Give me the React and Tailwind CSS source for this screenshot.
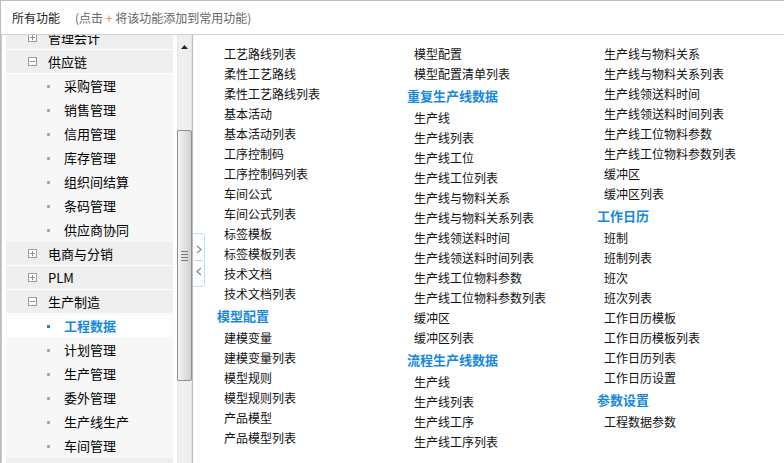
import React from "react";

const FONT = { fontFamily: '"Noto Sans CJK SC", "Noto Sans", sans-serif' };

const TREE = [
  { type: "group", label: "管理会计", open: false },
  { type: "group", label: "供应链", open: true },
  { type: "child", label: "采购管理" },
  { type: "child", label: "销售管理" },
  { type: "child", label: "信用管理" },
  { type: "child", label: "库存管理" },
  { type: "child", label: "组织间结算" },
  { type: "child", label: "条码管理" },
  { type: "child", label: "供应商协同" },
  { type: "group", label: "电商与分销", open: false },
  { type: "group", label: "PLM", open: false },
  { type: "group", label: "生产制造", open: true },
  { type: "child", label: "工程数据", active: true },
  { type: "child", label: "计划管理" },
  { type: "child", label: "生产管理" },
  { type: "child", label: "委外管理" },
  { type: "child", label: "生产线生产" },
  { type: "child", label: "车间管理" },
  { type: "group", label: "质量管理", open: false },
];

const COLUMNS = [
  [
    "工艺路线列表", "柔性工艺路线", "柔性工艺路线列表", "基本活动", "基本活动列表",
    "工序控制码", "工序控制码列表", "车间公式", "车间公式列表", "标签模板",
    "标签模板列表", "技术文档", "技术文档列表",
    { h: "模型配置" },
    "建模变量", "建模变量列表", "模型规则", "模型规则列表", "产品模型", "产品模型列表",
  ],
  [
    "模型配置", "模型配置清单列表",
    { h: "重复生产线数据" },
    "生产线", "生产线列表", "生产线工位", "生产线工位列表", "生产线与物料关系",
    "生产线与物料关系列表", "生产线领送料时间", "生产线领送料时间列表",
    "生产线工位物料参数", "生产线工位物料参数列表", "缓冲区", "缓冲区列表",
    { h: "流程生产线数据" },
    "生产线", "生产线列表", "生产线工序", "生产线工序列表",
  ],
  [
    "生产线与物料关系", "生产线与物料关系列表", "生产线领送料时间", "生产线领送料时间列表",
    "生产线工位物料参数", "生产线工位物料参数列表", "缓冲区", "缓冲区列表",
    { h: "工作日历" },
    "班制", "班制列表", "班次", "班次列表", "工作日历模板", "工作日历模板列表",
    "工作日历列表", "工作日历设置",
    { h: "参数设置" },
    "工程数据参数",
  ],
];

function ToggleBox({ open }) {
  return (
    <span className="relative w-[9px] h-[9px] border border-[#9a9a9a] bg-white shrink-0">
      <span className="absolute left-[1px] right-[1px] top-[3px] h-[1px] bg-[#8a8a8a]" />
      {!open && <span className="absolute top-[1px] bottom-[1px] left-[3px] w-[1px] bg-[#8a8a8a]" />}
    </span>
  );
}

function TreeRow({ item }) {
  if (item.type === "group") {
    return (
      <div className="h-[24px] border-b border-white bg-[#efefef] flex items-center pl-[22px] gap-[11px] text-[13px] text-black">
        <ToggleBox open={item.open} />
        <span>{item.label}</span>
      </div>
    );
  }
  return (
    <div className="h-[24px] bg-[#f7f7f7] flex items-center">
      <div
        className={`flex-1 h-[22px] mx-[1px] flex items-center pl-[40px] gap-[14px] text-[13px] ${
          item.active ? "bg-white text-[#1688de] font-bold" : "text-black"
        }`}
      >
        <span className={`w-[3px] h-[3px] ${item.active ? "bg-[#1688de]" : "bg-[#a8a8a8]"}`} />
        <span>{item.label}</span>
      </div>
    </div>
  );
}

function Scrollbar() {
  return (
    <div className="w-[15px] bg-[#efefef] border-x border-[#e4e4e4] flex flex-col items-center">
      <div className="h-[22px] w-full flex items-center justify-center pt-[2px]">
        <svg width="7" height="4" viewBox="0 0 7 4"><path d="M3.5 0 L7 4 L0 4 Z" fill="#222" /></svg>
      </div>
      <div className="mt-[73px] w-[15px] h-[251px] border border-[#8f8f8f] rounded-[2px] bg-gradient-to-r from-[#f4f4f4] via-[#e2e2e2] to-[#cfcfcf] flex flex-col items-center justify-center gap-[2px]">
        <span className="w-[7px] h-[1px] bg-[#777]" />
        <span className="w-[7px] h-[1px] bg-[#777]" />
        <span className="w-[7px] h-[1px] bg-[#777]" />
        <span className="w-[7px] h-[1px] bg-[#777]" />
      </div>
    </div>
  );
}

export default function App() {
  return (
    <div className="w-[784px] h-[463px] overflow-hidden bg-white border-t border-l border-[#bdbdbd] flex flex-col" style={FONT}>
      {/* Header */}
      <div className="h-[33px] shrink-0 flex items-center pl-[11px] text-[12px]">
        <span className="text-[#222]">所有功能</span>
        <span className="ml-[15px] text-[#666]">
          (点击 <span className="text-[#e08a3c]">+</span> 将该功能添加到常用功能)
        </span>
      </div>

      <div className="flex-1 flex border-t border-[#d0d0d0] min-h-0">
        {/* Left tree */}
        <div className="w-[192px] shrink-0 flex border-l border-[#c8c8c8] border-r border-r-[#bcbcbc]">
          <div className="flex-1 overflow-hidden px-[4px]">
            <div className="-mt-[9px]">
              {TREE.map((item, i) => (
                <TreeRow key={i} item={item} />
              ))}
            </div>
          </div>
          <Scrollbar />
        </div>

        {/* Right content */}
        <div className="relative flex-1 flex pl-[24px] pt-[9px] overflow-hidden">
          <div className="absolute left-0 top-[198px] w-[12px] h-[54px] border border-l-0 border-[#bfdcf3] rounded-r-[4px] bg-white flex flex-col items-center justify-center gap-[4px]">
            <svg width="6" height="9" viewBox="0 0 6 9"><path d="M1 1 L5 4.5 L1 8" fill="none" stroke="#888" strokeWidth="1.2" /></svg>
            <span className="w-[8px] h-[1px] bg-[#d0d0d0] my-[2px]" />
            <svg width="6" height="9" viewBox="0 0 6 9"><path d="M5 1 L1 4.5 L5 8" fill="none" stroke="#888" strokeWidth="1.2" /></svg>
          </div>
          {COLUMNS.map((col, ci) => (
            <div key={ci} className="w-[190px] shrink-0 flex flex-col">
              {col.map((it, i) =>
                typeof it === "string" ? (
                  <div key={i} className="h-[20px] leading-[20px] pl-[7px] text-[12px] text-[#111] whitespace-nowrap">
                    {it}
                  </div>
                ) : (
                  <div key={i} className="h-[24px] leading-[24px] text-[13px] font-bold text-[#1688de] whitespace-nowrap">
                    {it.h}
                  </div>
                )
              )}
            </div>
          ))}
        </div>
      </div>
    </div>
  );
}
